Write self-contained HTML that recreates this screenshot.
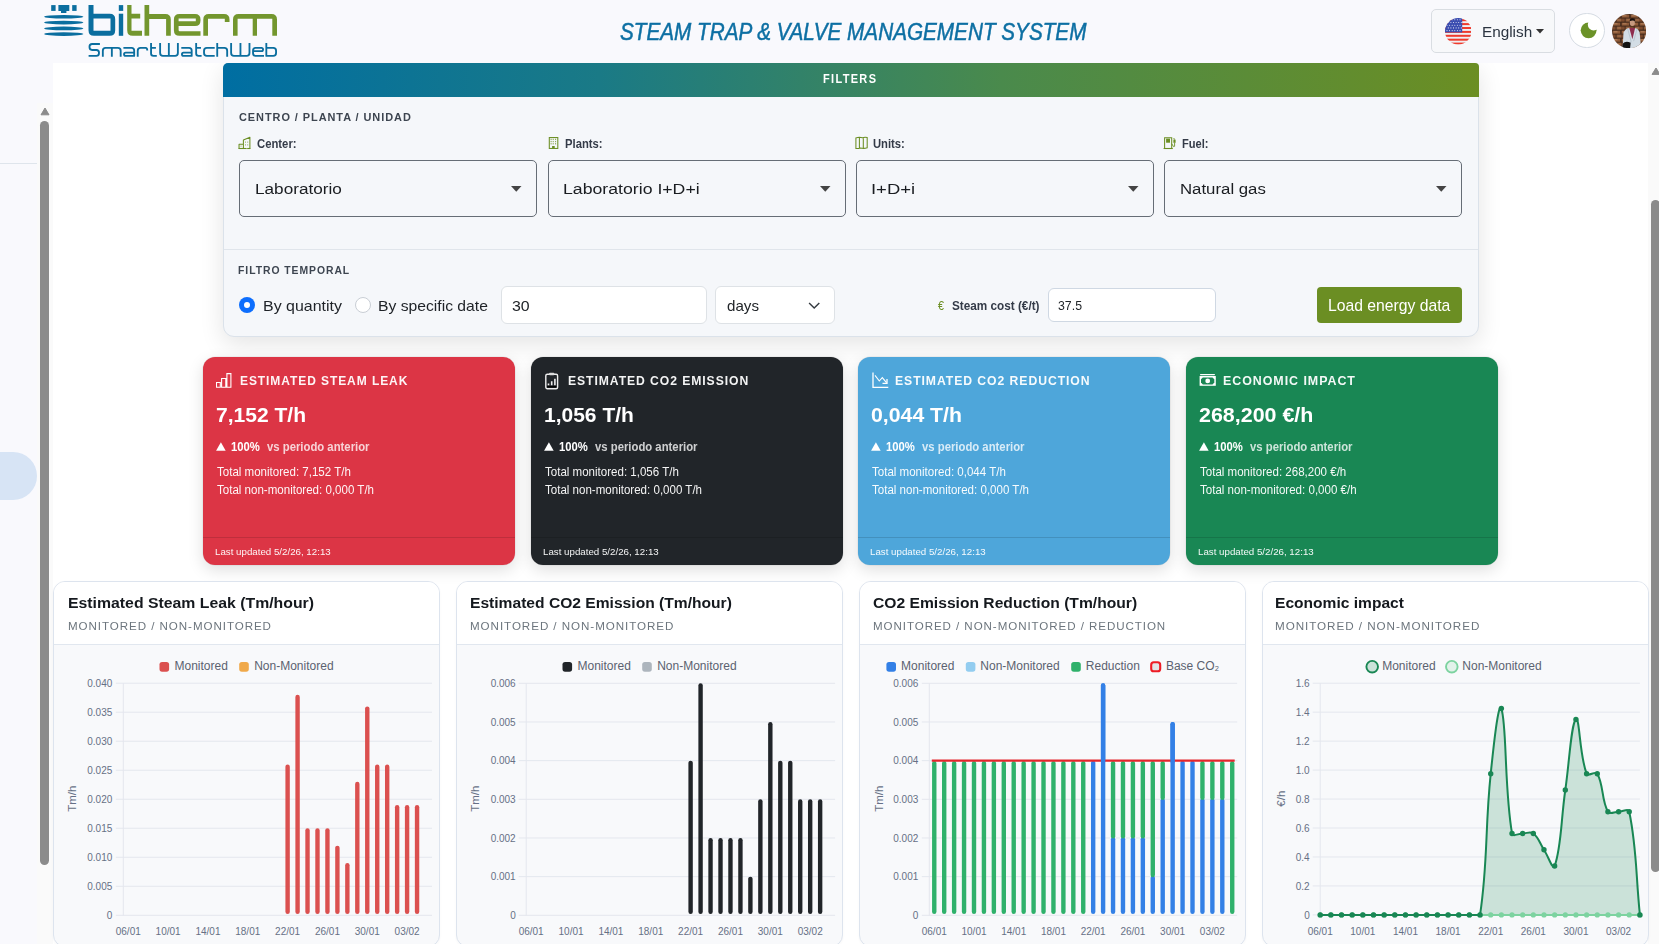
<!DOCTYPE html><html><head><meta charset="utf-8"><style>
*{box-sizing:border-box;margin:0;padding:0}
html,body{width:1659px;height:944px;overflow:hidden;background:#f9f9fd;font-family:"Liberation Sans",sans-serif;}
.a{position:absolute}
.t{position:absolute;white-space:nowrap;line-height:1}
</style></head><body><div class="a" style="left:0;top:163px;width:37px;height:1px;background:#dfe5ec"></div>
<div class="a" style="left:-30px;top:452px;width:67px;height:48px;border-radius:24px;background:#d7e4f5"></div>
<div class="a" style="left:37px;top:103px;width:15.5px;height:841px;background:#fafafa"></div>
<svg class="a" style="left:39.5px;top:107px" width="10" height="9"><path d="M5 1L9 7.8H1Z" fill="#8b8b8b" stroke="#8b8b8b" stroke-width="1" stroke-linejoin="round"/></svg>
<div class="a" style="left:40px;top:120.7px;width:9px;height:744.3px;border-radius:4.5px;background:#8b8b8b"></div>
<div class="a" style="left:52.5px;top:63px;width:1595.5px;height:881px;background:#fff"></div>
<div class="a" style="left:1648px;top:63px;width:11px;height:881px;background:#fafafa"></div>
<svg class="a" style="left:1650.5px;top:66px" width="10" height="9"><path d="M5 2L9 8.4H1Z" fill="#8b8b8b" stroke="#8b8b8b" stroke-width="1" stroke-linejoin="round"/></svg>
<div class="a" style="left:1651px;top:200px;width:9px;height:672px;border-radius:4.5px;background:#8b8b8b"></div>
<div class="a" style="left:223px;top:63px;width:1255.5px;height:274px;border:1px solid #dbe2ea;border-radius:5px 4px 11px 11px;background:#f5f7fa;box-shadow:0 7px 24px rgba(0,0,0,0.11)"></div>
<div class="a" style="left:223px;top:63px;width:1255.5px;height:34px;border-radius:5px 4px 0 0;background:linear-gradient(90deg,#006ea2 0%,#1a7a86 30%,#4a8a4c 62%,#6b8e23 100%)"></div>
<div class="a" style="left:224px;top:249px;width:1253.5px;height:1px;background:#e0e5eb"></div>
<div class="t" style="left:823.27px;top:72.00px;font-size:13.188px;font-weight:bold;font-style:normal;letter-spacing:1.600px;color:#fff;transform:scaleX(0.8339);transform-origin:0 0;">FILTERS</div>
<div class="t" style="left:239.10px;top:112.00px;font-size:11.594px;font-weight:bold;font-style:normal;letter-spacing:1.000px;color:#3d4550;transform:scaleX(0.9445);transform-origin:0 0;">CENTRO / PLANTA / UNIDAD</div>
<svg class="a" style="left:236px;top:134px" width="18" height="18" viewBox="0 0 18 18"><path d="M3.05 14.4V10.3H7.4V6.1L13.9 3.25V14.4Z M7.4 14.4V10.3" stroke="#6b8e23" stroke-width="1.05" fill="none" stroke-linejoin="round"/><path d="M2.6 14.5H14.3" stroke="#6b8e23" stroke-width="1.1"/><g fill="#6b8e23" opacity="0.75"><rect x="9" y="7.6" width="1" height="1"/><rect x="11.2" y="7.6" width="1" height="1"/><rect x="9" y="10.4" width="1" height="1"/><rect x="11.2" y="10.4" width="1" height="1"/><rect x="4.5" y="11.6" width="1" height="1"/></g><rect x="10.2" y="12.6" width="1.2" height="1.8" fill="#f5f7fa"/></svg>
<svg class="a" style="left:545px;top:134px" width="18" height="18" viewBox="0 0 18 18"><rect x="4.3" y="3.55" width="8.5" height="10.9" stroke="#6b8e23" stroke-width="1.05" fill="none"/><g fill="#6b8e23" opacity="0.8"><rect x="5.6" y="4.7" width="1" height="1.3"/><rect x="7.7" y="4.7" width="1" height="1.3"/><rect x="10.1" y="4.7" width="1" height="1.3"/><rect x="5.6" y="6.9" width="1" height="1.3"/><rect x="7.7" y="6.9" width="1" height="1.3"/><rect x="10.1" y="6.9" width="1" height="1.3"/><rect x="5.6" y="9.1" width="1" height="1.3"/><rect x="7.7" y="9.1" width="1" height="1.3"/><rect x="10.1" y="9.1" width="1" height="1.3"/></g><rect x="7.1" y="12" width="2.6" height="2.4" fill="#6b8e23"/></svg>
<svg class="a" style="left:852px;top:134px" width="18" height="18" viewBox="0 0 18 18"><path d="M3.9 14.5V3.9Q7 2.8 10.5 3.7Q13 2.9 15.2 3.6V13.8Q12 14.8 8.5 14Q6 14.8 3.9 14.5Z M7.4 3.5V14 M11.3 3.6V14.3" stroke="#6b8e23" stroke-width="1.05" fill="none"/></svg>
<svg class="a" style="left:1161px;top:134px" width="18" height="18" viewBox="0 0 18 18"><path d="M3.6 14.5V3.7H10.7V14.5" stroke="#6b8e23" stroke-width="1.05" fill="none"/><path d="M2.6 14.5H11.8" stroke="#6b8e23" stroke-width="1.1"/><rect x="5.1" y="4.6" width="3.9" height="4.1" fill="#6b8e23"/><rect x="12.4" y="5.6" width="2.2" height="3.2" fill="#6b8e23"/><path d="M10.7 9.8L12.6 12.6L13.6 12.3V8.8M13.4 5.6L12.8 4" stroke="#6b8e23" stroke-width="0.9" fill="none"/></svg>
<div class="t" style="left:257.20px;top:137.00px;font-size:13.043px;font-weight:bold;font-style:normal;letter-spacing:0.000px;color:#343b48;transform:scaleX(0.8667);transform-origin:0 0;">Center:</div>
<div class="t" style="left:564.94px;top:137.00px;font-size:13.043px;font-weight:bold;font-style:normal;letter-spacing:0.000px;color:#343b48;transform:scaleX(0.8634);transform-origin:0 0;">Plants:</div>
<div class="t" style="left:873.14px;top:137.00px;font-size:13.043px;font-weight:bold;font-style:normal;letter-spacing:0.000px;color:#343b48;transform:scaleX(0.8629);transform-origin:0 0;">Units:</div>
<div class="t" style="left:1181.65px;top:137.00px;font-size:13.043px;font-weight:bold;font-style:normal;letter-spacing:0.000px;color:#343b48;transform:scaleX(0.8517);transform-origin:0 0;">Fuel:</div>
<div class="a" style="left:239.0px;top:160.3px;width:298px;height:56.3px;border:1.3px solid #666d76;border-radius:5px;background:#f5f7fa"></div>
<div class="t" style="left:254.52px;top:182.00px;font-size:14.493px;font-weight:normal;font-style:normal;letter-spacing:0.000px;color:#1a1d21;transform:scaleX(1.1847);transform-origin:0 0;">Laboratorio</div>
<svg class="a" style="left:511.0px;top:186px" width="11" height="6"><path d="M0 0H10.5L5.25 5.8Z" fill="#444"/></svg>
<div class="a" style="left:547.6px;top:160.3px;width:298px;height:56.3px;border:1.3px solid #666d76;border-radius:5px;background:#f5f7fa"></div>
<div class="t" style="left:562.78px;top:182.00px;font-size:14.493px;font-weight:normal;font-style:normal;letter-spacing:0.000px;color:#1a1d21;transform:scaleX(1.2209);transform-origin:0 0;">Laboratorio I+D+i</div>
<svg class="a" style="left:819.6px;top:186px" width="11" height="6"><path d="M0 0H10.5L5.25 5.8Z" fill="#444"/></svg>
<div class="a" style="left:856.2px;top:160.3px;width:298px;height:56.3px;border:1.3px solid #666d76;border-radius:5px;background:#f5f7fa"></div>
<div class="t" style="left:870.93px;top:182.00px;font-size:14.493px;font-weight:normal;font-style:normal;letter-spacing:0.000px;color:#1a1d21;transform:scaleX(1.2727);transform-origin:0 0;">I+D+i</div>
<svg class="a" style="left:1128.2px;top:186px" width="11" height="6"><path d="M0 0H10.5L5.25 5.8Z" fill="#444"/></svg>
<div class="a" style="left:1164.0px;top:160.3px;width:298px;height:56.3px;border:1.3px solid #666d76;border-radius:5px;background:#f5f7fa"></div>
<div class="t" style="left:1179.64px;top:182.00px;font-size:14.493px;font-weight:normal;font-style:normal;letter-spacing:0.000px;color:#1a1d21;transform:scaleX(1.1589);transform-origin:0 0;">Natural gas</div>
<svg class="a" style="left:1436.0px;top:186px" width="11" height="6"><path d="M0 0H10.5L5.25 5.8Z" fill="#444"/></svg>
<div class="t" style="left:238.34px;top:265.00px;font-size:10.870px;font-weight:bold;font-style:normal;letter-spacing:1.000px;color:#3d4550;transform:scaleX(0.9557);transform-origin:0 0;">FILTRO TEMPORAL</div>
<div class="a" style="left:238.5px;top:296.6px;width:16.6px;height:16.6px;border-radius:50%;background:#0d6efd"></div>
<div class="a" style="left:243.6px;top:301.7px;width:6.4px;height:6.4px;border-radius:50%;background:#fff"></div>
<div class="t" style="left:262.72px;top:299.00px;font-size:14.710px;font-weight:normal;font-style:normal;letter-spacing:0.000px;color:#1e2227;transform:scaleX(1.0847);transform-origin:0 0;">By quantity</div>
<div class="a" style="left:355px;top:296.6px;width:16.4px;height:16.4px;border-radius:50%;border:1px solid #c9ced5;background:#fff"></div>
<div class="t" style="left:378.43px;top:299.00px;font-size:14.710px;font-weight:normal;font-style:normal;letter-spacing:0.000px;color:#1e2227;transform:scaleX(1.0673);transform-origin:0 0;">By specific date</div>
<div class="a" style="left:500.5px;top:286.3px;width:206px;height:37.3px;border:1px solid #dee2e6;border-radius:6px;background:#fff"></div>
<div class="t" style="left:512.42px;top:299.00px;font-size:14.710px;font-weight:normal;font-style:normal;letter-spacing:0.000px;color:#212529;transform:scaleX(1.0800);transform-origin:0 0;">30</div>
<div class="a" style="left:715.4px;top:286.3px;width:119.2px;height:37.3px;border:1px solid #dee2e6;border-radius:6px;background:#fff"></div>
<div class="t" style="left:727.27px;top:299.00px;font-size:14.710px;font-weight:normal;font-style:normal;letter-spacing:0.000px;color:#212529;transform:scaleX(1.0300);transform-origin:0 0;">days</div>
<svg class="a" style="left:808px;top:301.5px" width="13" height="8"><path d="M1.1 1.1L6.2 6.1L11.3 1.1" stroke="#343a40" stroke-width="1.45" fill="none"/></svg>
<div class="t" style="left:938.00px;top:300.00px;font-size:12.319px;font-weight:normal;font-style:normal;letter-spacing:0.000px;color:#6b8e23;transform:scaleX(0.8714);transform-origin:0 0;">&#8364;</div>
<div class="t" style="left:952.44px;top:300.00px;font-size:12.319px;font-weight:bold;font-style:normal;letter-spacing:0.000px;color:#343b48;transform:scaleX(0.9556);transform-origin:0 0;">Steam cost (&#8364;/t)</div>
<div class="a" style="left:1048.3px;top:288.2px;width:168px;height:33.6px;border:1px solid #cfd8e3;border-radius:6px;background:#fff"></div>
<div class="t" style="left:1058.32px;top:300.00px;font-size:12.609px;font-weight:normal;font-style:normal;letter-spacing:0.000px;color:#212529;transform:scaleX(0.9783);transform-origin:0 0;">37.5</div>
<div class="a" style="left:1317.2px;top:287px;width:144.7px;height:36px;border-radius:4px;background:#6b8e23"></div>
<div class="t" style="left:1327.90px;top:298.00px;font-size:15.797px;font-weight:normal;font-style:normal;letter-spacing:0.000px;color:#fff;transform:scaleX(0.9959);transform-origin:0 0;">Load energy data</div>
<div class="a" style="left:203.2px;top:357px;width:311.7px;height:208px;border-radius:12px;background:#dc3545;box-shadow:0 5px 16px rgba(0,0,0,0.13),0 0 0 0.5px rgba(0,0,0,0.08);overflow:hidden"><div class="a" style="left:0;right:0;top:180px;height:1px;background:rgba(0,0,0,0.13)"></div></div>
<svg class="a" style="left:216.4px;top:372.5px" width="16" height="15"><path d="M0.5 9.5H4.3V14.3H0.5Z M5.6 5.5H9.8V14.3H5.6Z M10.9 0.6H14.9V14.3H10.9Z" stroke="#fff" stroke-width="1.1" fill="none"/></svg>
<svg class="a" style="left:216.1px;top:442px" width="10" height="9"><path d="M4.9 0.2L9.7 8.8H0.1Z" fill="#fff"/></svg>
<div class="t" style="left:240.08px;top:374.00px;font-size:13.043px;font-weight:bold;font-style:normal;letter-spacing:1.000px;color:rgba(255,255,255,0.95);transform:scaleX(0.9211);transform-origin:0 0;">ESTIMATED STEAM LEAK</div>
<div class="t" style="left:215.56px;top:405.00px;font-size:20.290px;font-weight:bold;font-style:normal;letter-spacing:0.000px;color:#fff;transform:scaleX(1.0376);transform-origin:0 0;">7,152 T/h</div>
<div class="t" style="left:230.82px;top:441.00px;font-size:12.899px;font-weight:bold;font-style:normal;letter-spacing:0.000px;color:#fff;transform:scaleX(0.8781);transform-origin:0 0;">100%</div>
<div class="t" style="left:266.70px;top:441.00px;font-size:12.464px;font-weight:bold;font-style:normal;letter-spacing:0.000px;color:rgba(255,255,255,0.78);transform:scaleX(0.9088);transform-origin:0 0;">vs periodo anterior</div>
<div class="t" style="left:216.90px;top:466.00px;font-size:12.174px;font-weight:normal;font-style:normal;letter-spacing:0.000px;color:rgba(255,255,255,0.95);transform:scaleX(0.9493);transform-origin:0 0;">Total monitored: 7,152 T/h</div>
<div class="t" style="left:216.90px;top:484.00px;font-size:12.319px;font-weight:normal;font-style:normal;letter-spacing:0.000px;color:rgba(255,255,255,0.95);transform:scaleX(0.9389);transform-origin:0 0;">Total non-monitored: 0,000 T/h</div>
<div class="t" style="left:215.25px;top:548.00px;font-size:9.275px;font-weight:normal;font-style:normal;letter-spacing:0.000px;color:rgba(255,255,255,0.95);transform:scaleX(1.0495);transform-origin:0 0;">Last updated 5/2/26, 12:13</div>
<div class="a" style="left:531.3px;top:357px;width:311.7px;height:208px;border-radius:12px;background:#212529;box-shadow:0 5px 16px rgba(0,0,0,0.13),0 0 0 0.5px rgba(0,0,0,0.08);overflow:hidden"><div class="a" style="left:0;right:0;top:180px;height:1px;background:rgba(0,0,0,0.13)"></div></div>
<svg class="a" style="left:545.1px;top:371.5px" width="14" height="18"><rect x="0.8" y="2.2" width="11.8" height="14.5" rx="1.5" stroke="#eee" stroke-width="1.4" fill="none"/><rect x="4" y="0.7" width="5.4" height="2.6" rx="1" fill="#ddd"/><path d="M3.5 13.2V11.5M6.7 13.2V9.2M9.9 13.2V6.8" stroke="#eee" stroke-width="1.6"/><rect x="2.2" y="14" width="9" height="1.4" fill="#000"/></svg>
<svg class="a" style="left:544.2px;top:442px" width="10" height="9"><path d="M4.9 0.2L9.7 8.8H0.1Z" fill="#fff"/></svg>
<div class="t" style="left:568.17px;top:374.00px;font-size:13.043px;font-weight:bold;font-style:normal;letter-spacing:1.000px;color:rgba(255,255,255,0.95);transform:scaleX(0.9333);transform-origin:0 0;">ESTIMATED CO2 EMISSION</div>
<div class="t" style="left:543.66px;top:405.00px;font-size:20.290px;font-weight:bold;font-style:normal;letter-spacing:0.000px;color:#fff;transform:scaleX(1.0353);transform-origin:0 0;">1,056 T/h</div>
<div class="t" style="left:558.92px;top:441.00px;font-size:12.899px;font-weight:bold;font-style:normal;letter-spacing:0.000px;color:#fff;transform:scaleX(0.8781);transform-origin:0 0;">100%</div>
<div class="t" style="left:594.80px;top:441.00px;font-size:12.464px;font-weight:bold;font-style:normal;letter-spacing:0.000px;color:rgba(255,255,255,0.78);transform:scaleX(0.9088);transform-origin:0 0;">vs periodo anterior</div>
<div class="t" style="left:545.00px;top:466.00px;font-size:12.174px;font-weight:normal;font-style:normal;letter-spacing:0.000px;color:rgba(255,255,255,0.95);transform:scaleX(0.9493);transform-origin:0 0;">Total monitored: 1,056 T/h</div>
<div class="t" style="left:545.00px;top:484.00px;font-size:12.319px;font-weight:normal;font-style:normal;letter-spacing:0.000px;color:rgba(255,255,255,0.95);transform:scaleX(0.9389);transform-origin:0 0;">Total non-monitored: 0,000 T/h</div>
<div class="t" style="left:543.35px;top:548.00px;font-size:9.275px;font-weight:normal;font-style:normal;letter-spacing:0.000px;color:rgba(255,255,255,0.95);transform:scaleX(1.0495);transform-origin:0 0;">Last updated 5/2/26, 12:13</div>
<div class="a" style="left:858.2px;top:357px;width:311.7px;height:208px;border-radius:12px;background:#4ea6da;box-shadow:0 5px 16px rgba(0,0,0,0.13),0 0 0 0.5px rgba(0,0,0,0.08);overflow:hidden"><div class="a" style="left:0;right:0;top:180px;height:1px;background:rgba(0,0,0,0.13)"></div></div>
<svg class="a" style="left:872.0px;top:372px" width="17" height="16"><path d="M1 0.5V15.3H16.3" stroke="#fff" stroke-width="1.3" fill="none"/><path d="M3 3.3L7.3 9L10.3 5.6L14.5 10.6" stroke="#fff" stroke-width="1.1" fill="none"/><path d="M10.5 11.3H15V7" stroke="#fff" stroke-width="1.3" fill="none"/></svg>
<svg class="a" style="left:871.1px;top:442px" width="10" height="9"><path d="M4.9 0.2L9.7 8.8H0.1Z" fill="#fff"/></svg>
<div class="t" style="left:895.06px;top:374.00px;font-size:13.043px;font-weight:bold;font-style:normal;letter-spacing:1.000px;color:rgba(255,255,255,0.95);transform:scaleX(0.9364);transform-origin:0 0;">ESTIMATED CO2 REDUCTION</div>
<div class="t" style="left:870.55px;top:405.00px;font-size:20.290px;font-weight:bold;font-style:normal;letter-spacing:0.000px;color:#fff;transform:scaleX(1.0482);transform-origin:0 0;">0,044 T/h</div>
<div class="t" style="left:885.82px;top:441.00px;font-size:12.899px;font-weight:bold;font-style:normal;letter-spacing:0.000px;color:#fff;transform:scaleX(0.8781);transform-origin:0 0;">100%</div>
<div class="t" style="left:921.70px;top:441.00px;font-size:12.464px;font-weight:bold;font-style:normal;letter-spacing:0.000px;color:rgba(255,255,255,0.78);transform:scaleX(0.9088);transform-origin:0 0;">vs periodo anterior</div>
<div class="t" style="left:871.90px;top:466.00px;font-size:12.174px;font-weight:normal;font-style:normal;letter-spacing:0.000px;color:rgba(255,255,255,0.95);transform:scaleX(0.9493);transform-origin:0 0;">Total monitored: 0,044 T/h</div>
<div class="t" style="left:871.90px;top:484.00px;font-size:12.319px;font-weight:normal;font-style:normal;letter-spacing:0.000px;color:rgba(255,255,255,0.95);transform:scaleX(0.9389);transform-origin:0 0;">Total non-monitored: 0,000 T/h</div>
<div class="t" style="left:870.25px;top:548.00px;font-size:9.275px;font-weight:normal;font-style:normal;letter-spacing:0.000px;color:rgba(255,255,255,0.95);transform:scaleX(1.0495);transform-origin:0 0;">Last updated 5/2/26, 12:13</div>
<div class="a" style="left:1186.3px;top:357px;width:311.7px;height:208px;border-radius:12px;background:#198754;box-shadow:0 5px 16px rgba(0,0,0,0.13),0 0 0 0.5px rgba(0,0,0,0.08);overflow:hidden"><div class="a" style="left:0;right:0;top:180px;height:1px;background:rgba(0,0,0,0.13)"></div></div>
<svg class="a" style="left:1199.1px;top:374px" width="17" height="12"><rect x="1" y="0" width="15" height="1.2" rx="0.6" fill="#fff"/><rect x="0.6" y="2" width="16.2" height="9.8" fill="#fff"/><path d="M3.8 3.4H13.5L15.3 5.3V8.5L13.5 10.4H3.8L2 8.5V5.3Z" fill="#198754"/><circle cx="8.7" cy="6.9" r="2.4" fill="#fff"/></svg>
<svg class="a" style="left:1199.2px;top:442px" width="10" height="9"><path d="M4.9 0.2L9.7 8.8H0.1Z" fill="#fff"/></svg>
<div class="t" style="left:1223.15px;top:374.00px;font-size:13.043px;font-weight:bold;font-style:normal;letter-spacing:1.000px;color:rgba(255,255,255,0.95);transform:scaleX(0.9540);transform-origin:0 0;">ECONOMIC IMPACT</div>
<div class="t" style="left:1198.64px;top:405.00px;font-size:20.290px;font-weight:bold;font-style:normal;letter-spacing:0.000px;color:#fff;transform:scaleX(1.0566);transform-origin:0 0;">268,200 &#8364;/h</div>
<div class="t" style="left:1213.92px;top:441.00px;font-size:12.899px;font-weight:bold;font-style:normal;letter-spacing:0.000px;color:#fff;transform:scaleX(0.8781);transform-origin:0 0;">100%</div>
<div class="t" style="left:1249.80px;top:441.00px;font-size:12.464px;font-weight:bold;font-style:normal;letter-spacing:0.000px;color:rgba(255,255,255,0.78);transform:scaleX(0.9088);transform-origin:0 0;">vs periodo anterior</div>
<div class="t" style="left:1200.00px;top:466.00px;font-size:12.174px;font-weight:normal;font-style:normal;letter-spacing:0.000px;color:rgba(255,255,255,0.95);transform:scaleX(0.9493);transform-origin:0 0;">Total monitored: 268,200 &#8364;/h</div>
<div class="t" style="left:1200.00px;top:484.00px;font-size:12.319px;font-weight:normal;font-style:normal;letter-spacing:0.000px;color:rgba(255,255,255,0.95);transform:scaleX(0.9389);transform-origin:0 0;">Total non-monitored: 0,000 &#8364;/h</div>
<div class="t" style="left:1198.35px;top:548.00px;font-size:9.275px;font-weight:normal;font-style:normal;letter-spacing:0.000px;color:rgba(255,255,255,0.95);transform:scaleX(1.0495);transform-origin:0 0;">Last updated 5/2/26, 12:13</div>
<div class="a" style="left:53.2px;top:581.2px;width:387px;height:366px;border:1px solid #dde4ee;border-radius:12px;background:#f8f9fb;overflow:hidden;box-shadow:0 1px 3px rgba(0,0,0,0.03)"><div class="a" style="left:0;right:0;top:0;height:63px;background:#fff;border-bottom:1px solid #e1e7ef"></div></div>
<div class="t" style="left:67.92px;top:596.00px;font-size:14.710px;font-weight:bold;font-style:normal;letter-spacing:0.000px;color:#15191e;transform:scaleX(1.0753);transform-origin:0 0;">Estimated Steam Leak (Tm/hour)</div>
<div class="t" style="left:67.95px;top:621.00px;font-size:11.087px;font-weight:normal;font-style:normal;letter-spacing:0.900px;color:#6c757d;transform:scaleX(1.0456);transform-origin:0 0;">MONITORED / NON-MONITORED</div>
<div class="a" style="left:456.2px;top:581.2px;width:387px;height:366px;border:1px solid #dde4ee;border-radius:12px;background:#f8f9fb;overflow:hidden;box-shadow:0 1px 3px rgba(0,0,0,0.03)"><div class="a" style="left:0;right:0;top:0;height:63px;background:#fff;border-bottom:1px solid #e1e7ef"></div></div>
<div class="t" style="left:470.44px;top:596.00px;font-size:14.710px;font-weight:bold;font-style:normal;letter-spacing:0.000px;color:#15191e;transform:scaleX(1.0612);transform-origin:0 0;">Estimated CO2 Emission (Tm/hour)</div>
<div class="t" style="left:470.45px;top:621.00px;font-size:11.087px;font-weight:normal;font-style:normal;letter-spacing:0.900px;color:#6c757d;transform:scaleX(1.0477);transform-origin:0 0;">MONITORED / NON-MONITORED</div>
<div class="a" style="left:859.2px;top:581.2px;width:387px;height:366px;border:1px solid #dde4ee;border-radius:12px;background:#f8f9fb;overflow:hidden;box-shadow:0 1px 3px rgba(0,0,0,0.03)"><div class="a" style="left:0;right:0;top:0;height:63px;background:#fff;border-bottom:1px solid #e1e7ef"></div></div>
<div class="t" style="left:872.74px;top:596.00px;font-size:14.710px;font-weight:bold;font-style:normal;letter-spacing:0.000px;color:#15191e;transform:scaleX(1.0636);transform-origin:0 0;">CO2 Emission Reduction (Tm/hour)</div>
<div class="t" style="left:872.76px;top:621.00px;font-size:11.087px;font-weight:normal;font-style:normal;letter-spacing:0.900px;color:#6c757d;transform:scaleX(1.0435);transform-origin:0 0;">MONITORED / NON-MONITORED / REDUCTION</div>
<div class="a" style="left:1261.5px;top:581.2px;width:387px;height:366px;border:1px solid #dde4ee;border-radius:12px;background:#f8f9fb;overflow:hidden;box-shadow:0 1px 3px rgba(0,0,0,0.03)"><div class="a" style="left:0;right:0;top:0;height:63px;background:#fff;border-bottom:1px solid #e1e7ef"></div></div>
<div class="t" style="left:1275.44px;top:596.00px;font-size:14.710px;font-weight:bold;font-style:normal;letter-spacing:0.000px;color:#15191e;transform:scaleX(1.0587);transform-origin:0 0;">Economic impact</div>
<div class="t" style="left:1275.45px;top:621.00px;font-size:11.087px;font-weight:normal;font-style:normal;letter-spacing:0.900px;color:#6c757d;transform:scaleX(1.0528);transform-origin:0 0;">MONITORED / NON-MONITORED</div>
<svg class="a" style="left:0;top:0" width="1659" height="944" viewBox="0 0 1659 944" font-family="Liberation Sans, sans-serif"><line x1="115.8" y1="915.30" x2="432.0" y2="915.30" stroke="#e4e7ee" stroke-width="1"/><text x="112.3" y="918.90" text-anchor="end" font-size="10" fill="#667085">0</text><line x1="115.8" y1="886.29" x2="432.0" y2="886.29" stroke="#e4e7ee" stroke-width="1"/><text x="112.3" y="889.89" text-anchor="end" font-size="10" fill="#667085">0.005</text><line x1="115.8" y1="857.27" x2="432.0" y2="857.27" stroke="#e4e7ee" stroke-width="1"/><text x="112.3" y="860.88" text-anchor="end" font-size="10" fill="#667085">0.010</text><line x1="115.8" y1="828.26" x2="432.0" y2="828.26" stroke="#e4e7ee" stroke-width="1"/><text x="112.3" y="831.86" text-anchor="end" font-size="10" fill="#667085">0.015</text><line x1="115.8" y1="799.25" x2="432.0" y2="799.25" stroke="#e4e7ee" stroke-width="1"/><text x="112.3" y="802.85" text-anchor="end" font-size="10" fill="#667085">0.020</text><line x1="115.8" y1="770.24" x2="432.0" y2="770.24" stroke="#e4e7ee" stroke-width="1"/><text x="112.3" y="773.84" text-anchor="end" font-size="10" fill="#667085">0.025</text><line x1="115.8" y1="741.23" x2="432.0" y2="741.23" stroke="#e4e7ee" stroke-width="1"/><text x="112.3" y="744.83" text-anchor="end" font-size="10" fill="#667085">0.030</text><line x1="115.8" y1="712.21" x2="432.0" y2="712.21" stroke="#e4e7ee" stroke-width="1"/><text x="112.3" y="715.81" text-anchor="end" font-size="10" fill="#667085">0.035</text><line x1="115.8" y1="683.20" x2="432.0" y2="683.20" stroke="#e4e7ee" stroke-width="1"/><text x="112.3" y="686.80" text-anchor="end" font-size="10" fill="#667085">0.040</text><line x1="123.30" y1="683.2" x2="123.30" y2="915.8" stroke="#e4e7ee" stroke-width="1"/><text x="128.28" y="935.3" text-anchor="middle" font-size="10" fill="#667085">06/01</text><text x="168.11" y="935.3" text-anchor="middle" font-size="10" fill="#667085">10/01</text><text x="207.94" y="935.3" text-anchor="middle" font-size="10" fill="#667085">14/01</text><text x="247.78" y="935.3" text-anchor="middle" font-size="10" fill="#667085">18/01</text><text x="287.61" y="935.3" text-anchor="middle" font-size="10" fill="#667085">22/01</text><text x="327.44" y="935.3" text-anchor="middle" font-size="10" fill="#667085">26/01</text><text x="367.27" y="935.3" text-anchor="middle" font-size="10" fill="#667085">30/01</text><text x="407.10" y="935.3" text-anchor="middle" font-size="10" fill="#667085">03/02</text><text transform="translate(76.4 798.7) rotate(-90)" text-anchor="middle" font-size="11.5" fill="#667085">Tm/h</text><rect x="285.41" y="764.44" width="4.40" height="149.56" rx="2.20" fill="#db504f"/><rect x="295.37" y="694.81" width="4.40" height="219.19" rx="2.20" fill="#db504f"/><rect x="305.32" y="828.26" width="4.40" height="85.74" rx="2.20" fill="#db504f"/><rect x="315.28" y="828.26" width="4.40" height="85.74" rx="2.20" fill="#db504f"/><rect x="325.24" y="828.26" width="4.40" height="85.74" rx="2.20" fill="#db504f"/><rect x="335.20" y="845.67" width="4.40" height="68.33" rx="2.20" fill="#db504f"/><rect x="345.16" y="863.08" width="4.40" height="50.92" rx="2.20" fill="#db504f"/><rect x="355.11" y="781.84" width="4.40" height="132.16" rx="2.20" fill="#db504f"/><rect x="365.07" y="706.41" width="4.40" height="207.59" rx="2.20" fill="#db504f"/><rect x="375.03" y="764.44" width="4.40" height="149.56" rx="2.20" fill="#db504f"/><rect x="384.99" y="764.44" width="4.40" height="149.56" rx="2.20" fill="#db504f"/><rect x="394.95" y="805.05" width="4.40" height="108.95" rx="2.20" fill="#db504f"/><rect x="404.90" y="805.05" width="4.40" height="108.95" rx="2.20" fill="#db504f"/><rect x="414.86" y="805.05" width="4.40" height="108.95" rx="2.20" fill="#db504f"/><rect x="159.5" y="661.9" width="9.6" height="9.8" rx="2.6" fill="#db504f"/><text x="174.5" y="670.2" font-size="12" fill="#5b6270">Monitored</text><rect x="239.2" y="661.9" width="9.6" height="9.8" rx="2.6" fill="#f0a94a"/><text x="254.2" y="670.2" font-size="12" fill="#5b6270">Non-Monitored</text><line x1="518.7" y1="915.30" x2="835.1" y2="915.30" stroke="#e4e7ee" stroke-width="1"/><text x="515.7" y="918.90" text-anchor="end" font-size="10" fill="#667085">0</text><line x1="518.7" y1="876.63" x2="835.1" y2="876.63" stroke="#e4e7ee" stroke-width="1"/><text x="515.7" y="880.23" text-anchor="end" font-size="10" fill="#667085">0.001</text><line x1="518.7" y1="837.97" x2="835.1" y2="837.97" stroke="#e4e7ee" stroke-width="1"/><text x="515.7" y="841.57" text-anchor="end" font-size="10" fill="#667085">0.002</text><line x1="518.7" y1="799.30" x2="835.1" y2="799.30" stroke="#e4e7ee" stroke-width="1"/><text x="515.7" y="802.90" text-anchor="end" font-size="10" fill="#667085">0.003</text><line x1="518.7" y1="760.63" x2="835.1" y2="760.63" stroke="#e4e7ee" stroke-width="1"/><text x="515.7" y="764.23" text-anchor="end" font-size="10" fill="#667085">0.004</text><line x1="518.7" y1="721.97" x2="835.1" y2="721.97" stroke="#e4e7ee" stroke-width="1"/><text x="515.7" y="725.57" text-anchor="end" font-size="10" fill="#667085">0.005</text><line x1="518.7" y1="683.30" x2="835.1" y2="683.30" stroke="#e4e7ee" stroke-width="1"/><text x="515.7" y="686.90" text-anchor="end" font-size="10" fill="#667085">0.006</text><line x1="526.20" y1="683.3" x2="526.20" y2="915.8" stroke="#e4e7ee" stroke-width="1"/><text x="531.18" y="935.3" text-anchor="middle" font-size="10" fill="#667085">06/01</text><text x="571.04" y="935.3" text-anchor="middle" font-size="10" fill="#667085">10/01</text><text x="610.90" y="935.3" text-anchor="middle" font-size="10" fill="#667085">14/01</text><text x="650.76" y="935.3" text-anchor="middle" font-size="10" fill="#667085">18/01</text><text x="690.61" y="935.3" text-anchor="middle" font-size="10" fill="#667085">22/01</text><text x="730.47" y="935.3" text-anchor="middle" font-size="10" fill="#667085">26/01</text><text x="770.33" y="935.3" text-anchor="middle" font-size="10" fill="#667085">30/01</text><text x="810.19" y="935.3" text-anchor="middle" font-size="10" fill="#667085">03/02</text><text transform="translate(479.4 798.7) rotate(-90)" text-anchor="middle" font-size="11.5" fill="#667085">Tm/h</text><rect x="688.41" y="760.63" width="4.40" height="153.37" rx="2.20" fill="#212529"/><rect x="698.38" y="683.30" width="4.40" height="230.70" rx="2.20" fill="#212529"/><rect x="708.34" y="837.97" width="4.40" height="76.03" rx="2.20" fill="#212529"/><rect x="718.31" y="837.97" width="4.40" height="76.03" rx="2.20" fill="#212529"/><rect x="728.27" y="837.97" width="4.40" height="76.03" rx="2.20" fill="#212529"/><rect x="738.24" y="837.97" width="4.40" height="76.03" rx="2.20" fill="#212529"/><rect x="748.20" y="876.63" width="4.40" height="37.37" rx="2.20" fill="#212529"/><rect x="758.17" y="799.30" width="4.40" height="114.70" rx="2.20" fill="#212529"/><rect x="768.13" y="721.97" width="4.40" height="192.03" rx="2.20" fill="#212529"/><rect x="778.10" y="760.63" width="4.40" height="153.37" rx="2.20" fill="#212529"/><rect x="788.06" y="760.63" width="4.40" height="153.37" rx="2.20" fill="#212529"/><rect x="798.02" y="799.30" width="4.40" height="114.70" rx="2.20" fill="#212529"/><rect x="807.99" y="799.30" width="4.40" height="114.70" rx="2.20" fill="#212529"/><rect x="817.95" y="799.30" width="4.40" height="114.70" rx="2.20" fill="#212529"/><rect x="562.5" y="661.9" width="9.6" height="9.8" rx="2.6" fill="#212529"/><text x="577.5" y="670.2" font-size="12" fill="#5b6270">Monitored</text><rect x="642.2" y="661.9" width="9.6" height="9.8" rx="2.6" fill="#adb5bd"/><text x="657.2" y="670.2" font-size="12" fill="#5b6270">Non-Monitored</text><line x1="921.8" y1="915.30" x2="1237.2" y2="915.30" stroke="#e4e7ee" stroke-width="1"/><text x="918.3" y="918.90" text-anchor="end" font-size="10" fill="#667085">0</text><line x1="921.8" y1="876.63" x2="1237.2" y2="876.63" stroke="#e4e7ee" stroke-width="1"/><text x="918.3" y="880.23" text-anchor="end" font-size="10" fill="#667085">0.001</text><line x1="921.8" y1="837.97" x2="1237.2" y2="837.97" stroke="#e4e7ee" stroke-width="1"/><text x="918.3" y="841.57" text-anchor="end" font-size="10" fill="#667085">0.002</text><line x1="921.8" y1="799.30" x2="1237.2" y2="799.30" stroke="#e4e7ee" stroke-width="1"/><text x="918.3" y="802.90" text-anchor="end" font-size="10" fill="#667085">0.003</text><line x1="921.8" y1="760.63" x2="1237.2" y2="760.63" stroke="#e4e7ee" stroke-width="1"/><text x="918.3" y="764.23" text-anchor="end" font-size="10" fill="#667085">0.004</text><line x1="921.8" y1="721.97" x2="1237.2" y2="721.97" stroke="#e4e7ee" stroke-width="1"/><text x="918.3" y="725.57" text-anchor="end" font-size="10" fill="#667085">0.005</text><line x1="921.8" y1="683.30" x2="1237.2" y2="683.30" stroke="#e4e7ee" stroke-width="1"/><text x="918.3" y="686.90" text-anchor="end" font-size="10" fill="#667085">0.006</text><line x1="929.30" y1="683.3" x2="929.30" y2="915.8" stroke="#e4e7ee" stroke-width="1"/><text x="934.27" y="935.3" text-anchor="middle" font-size="10" fill="#667085">06/01</text><text x="974.00" y="935.3" text-anchor="middle" font-size="10" fill="#667085">10/01</text><text x="1013.72" y="935.3" text-anchor="middle" font-size="10" fill="#667085">14/01</text><text x="1053.45" y="935.3" text-anchor="middle" font-size="10" fill="#667085">18/01</text><text x="1093.18" y="935.3" text-anchor="middle" font-size="10" fill="#667085">22/01</text><text x="1132.91" y="935.3" text-anchor="middle" font-size="10" fill="#667085">26/01</text><text x="1172.64" y="935.3" text-anchor="middle" font-size="10" fill="#667085">30/01</text><text x="1212.37" y="935.3" text-anchor="middle" font-size="10" fill="#667085">03/02</text><text transform="translate(882.5 798.7) rotate(-90)" text-anchor="middle" font-size="11.5" fill="#667085">Tm/h</text><rect x="932.07" y="760.93" width="4.40" height="153.07" rx="2.20" fill="#2fb16b"/><rect x="942.00" y="760.93" width="4.40" height="153.07" rx="2.20" fill="#2fb16b"/><rect x="951.93" y="760.93" width="4.40" height="153.07" rx="2.20" fill="#2fb16b"/><rect x="961.86" y="760.93" width="4.40" height="153.07" rx="2.20" fill="#2fb16b"/><rect x="971.80" y="760.93" width="4.40" height="153.07" rx="2.20" fill="#2fb16b"/><rect x="981.73" y="760.93" width="4.40" height="153.07" rx="2.20" fill="#2fb16b"/><rect x="991.66" y="760.93" width="4.40" height="153.07" rx="2.20" fill="#2fb16b"/><rect x="1001.59" y="760.93" width="4.40" height="153.07" rx="2.20" fill="#2fb16b"/><rect x="1011.52" y="760.93" width="4.40" height="153.07" rx="2.20" fill="#2fb16b"/><rect x="1021.46" y="760.93" width="4.40" height="153.07" rx="2.20" fill="#2fb16b"/><rect x="1031.39" y="760.93" width="4.40" height="153.07" rx="2.20" fill="#2fb16b"/><rect x="1041.32" y="760.93" width="4.40" height="153.07" rx="2.20" fill="#2fb16b"/><rect x="1051.25" y="760.93" width="4.40" height="153.07" rx="2.20" fill="#2fb16b"/><rect x="1061.19" y="760.93" width="4.40" height="153.07" rx="2.20" fill="#2fb16b"/><rect x="1071.12" y="760.93" width="4.40" height="153.07" rx="2.20" fill="#2fb16b"/><rect x="1081.05" y="760.93" width="4.40" height="153.07" rx="2.20" fill="#2fb16b"/><rect x="1090.98" y="760.63" width="4.40" height="153.37" rx="2.20" fill="#3380e6"/><rect x="1100.91" y="683.30" width="4.40" height="230.70" rx="2.20" fill="#3380e6"/><rect x="1110.85" y="836.97" width="4.40" height="77.03" rx="2.20" fill="#3380e6"/><rect x="1110.85" y="760.93" width="4.40" height="77.63" rx="2.20" fill="#2fb16b"/><rect x="1120.78" y="836.97" width="4.40" height="77.03" rx="2.20" fill="#3380e6"/><rect x="1120.78" y="760.93" width="4.40" height="77.63" rx="2.20" fill="#2fb16b"/><rect x="1130.71" y="836.97" width="4.40" height="77.03" rx="2.20" fill="#3380e6"/><rect x="1130.71" y="760.93" width="4.40" height="77.63" rx="2.20" fill="#2fb16b"/><rect x="1140.64" y="836.97" width="4.40" height="77.03" rx="2.20" fill="#3380e6"/><rect x="1140.64" y="760.93" width="4.40" height="77.63" rx="2.20" fill="#2fb16b"/><rect x="1150.58" y="875.63" width="4.40" height="38.37" rx="2.20" fill="#3380e6"/><rect x="1150.58" y="760.93" width="4.40" height="116.30" rx="2.20" fill="#2fb16b"/><rect x="1160.51" y="798.30" width="4.40" height="115.70" rx="2.20" fill="#3380e6"/><rect x="1160.51" y="760.93" width="4.40" height="38.97" rx="2.20" fill="#2fb16b"/><rect x="1170.44" y="721.97" width="4.40" height="192.03" rx="2.20" fill="#3380e6"/><rect x="1180.37" y="760.63" width="4.40" height="153.37" rx="2.20" fill="#3380e6"/><rect x="1190.30" y="760.63" width="4.40" height="153.37" rx="2.20" fill="#3380e6"/><rect x="1200.24" y="798.30" width="4.40" height="115.70" rx="2.20" fill="#3380e6"/><rect x="1200.24" y="760.93" width="4.40" height="38.97" rx="2.20" fill="#2fb16b"/><rect x="1210.17" y="798.30" width="4.40" height="115.70" rx="2.20" fill="#3380e6"/><rect x="1210.17" y="760.93" width="4.40" height="38.97" rx="2.20" fill="#2fb16b"/><rect x="1220.10" y="798.30" width="4.40" height="115.70" rx="2.20" fill="#3380e6"/><rect x="1220.10" y="760.93" width="4.40" height="38.97" rx="2.20" fill="#2fb16b"/><rect x="1230.03" y="760.93" width="4.40" height="153.07" rx="2.20" fill="#2fb16b"/><line x1="931.8" y1="760.63" x2="1234.7" y2="760.63" stroke="#e4262c" stroke-width="2.2"/><rect x="1100.91" y="683.30" width="4.40" height="80.33" rx="2.20" fill="#3380e6"/><rect x="1170.44" y="721.97" width="4.40" height="41.67" rx="2.20" fill="#3380e6"/><rect x="886.4" y="661.9" width="9.6" height="9.8" rx="2.6" fill="#3380e6"/><text x="901.1" y="670.2" font-size="12" fill="#5b6270">Monitored</text><rect x="965.8" y="661.9" width="9.6" height="9.8" rx="2.6" fill="#93cdf0"/><text x="980.3" y="670.2" font-size="12" fill="#5b6270">Non-Monitored</text><rect x="1071.2" y="661.9" width="9.6" height="9.8" rx="2.6" fill="#2fb16b"/><text x="1085.8" y="670.2" font-size="12" fill="#5b6270">Reduction</text><rect x="1151.2" y="662.3" width="9" height="9" rx="2.6" fill="#e3e4e6" stroke="#ee1c25" stroke-width="2.1"/><text x="1165.9" y="670.2" font-size="12" fill="#5b6270">Base CO&#8322;</text><line x1="1312.7" y1="914.90" x2="1639.9" y2="914.90" stroke="#e4e7ee" stroke-width="1"/><text x="1309.7" y="918.50" text-anchor="end" font-size="10" fill="#667085">0</text><line x1="1312.7" y1="885.94" x2="1639.9" y2="885.94" stroke="#e4e7ee" stroke-width="1"/><text x="1309.7" y="889.54" text-anchor="end" font-size="10" fill="#667085">0.2</text><line x1="1312.7" y1="856.98" x2="1639.9" y2="856.98" stroke="#e4e7ee" stroke-width="1"/><text x="1309.7" y="860.58" text-anchor="end" font-size="10" fill="#667085">0.4</text><line x1="1312.7" y1="828.01" x2="1639.9" y2="828.01" stroke="#e4e7ee" stroke-width="1"/><text x="1309.7" y="831.61" text-anchor="end" font-size="10" fill="#667085">0.6</text><line x1="1312.7" y1="799.05" x2="1639.9" y2="799.05" stroke="#e4e7ee" stroke-width="1"/><text x="1309.7" y="802.65" text-anchor="end" font-size="10" fill="#667085">0.8</text><line x1="1312.7" y1="770.09" x2="1639.9" y2="770.09" stroke="#e4e7ee" stroke-width="1"/><text x="1309.7" y="773.69" text-anchor="end" font-size="10" fill="#667085">1.0</text><line x1="1312.7" y1="741.12" x2="1639.9" y2="741.12" stroke="#e4e7ee" stroke-width="1"/><text x="1309.7" y="744.73" text-anchor="end" font-size="10" fill="#667085">1.2</text><line x1="1312.7" y1="712.16" x2="1639.9" y2="712.16" stroke="#e4e7ee" stroke-width="1"/><text x="1309.7" y="715.76" text-anchor="end" font-size="10" fill="#667085">1.4</text><line x1="1312.7" y1="683.20" x2="1639.9" y2="683.20" stroke="#e4e7ee" stroke-width="1"/><text x="1309.7" y="686.80" text-anchor="end" font-size="10" fill="#667085">1.6</text><line x1="1320.20" y1="683.2" x2="1320.20" y2="915.4" stroke="#e4e7ee" stroke-width="1"/><text x="1320.20" y="935.3" text-anchor="middle" font-size="10" fill="#667085">06/01</text><text x="1362.83" y="935.3" text-anchor="middle" font-size="10" fill="#667085">10/01</text><text x="1405.45" y="935.3" text-anchor="middle" font-size="10" fill="#667085">14/01</text><text x="1448.08" y="935.3" text-anchor="middle" font-size="10" fill="#667085">18/01</text><text x="1490.71" y="935.3" text-anchor="middle" font-size="10" fill="#667085">22/01</text><text x="1533.33" y="935.3" text-anchor="middle" font-size="10" fill="#667085">26/01</text><text x="1575.96" y="935.3" text-anchor="middle" font-size="10" fill="#667085">30/01</text><text x="1618.59" y="935.3" text-anchor="middle" font-size="10" fill="#667085">03/02</text><text transform="translate(1285.4 798.7) rotate(-90)" text-anchor="middle" font-size="11.5" fill="#667085">&#8364;/h</text><path d="M1320.20 914.90C1324.46 914.90 1326.59 914.90 1330.86 914.90C1335.12 914.90 1337.25 914.90 1341.51 914.90C1345.78 914.90 1347.91 914.90 1352.17 914.90C1356.43 914.90 1358.56 914.90 1362.83 914.90C1367.09 914.90 1369.22 914.90 1373.48 914.90C1377.75 914.90 1379.88 914.90 1384.14 914.90C1388.40 914.90 1390.53 914.90 1394.80 914.90C1399.06 914.90 1401.19 914.90 1405.45 914.90C1409.72 914.90 1411.85 914.90 1416.11 914.90C1420.37 914.90 1422.50 914.90 1426.77 914.90C1431.03 914.90 1433.16 914.90 1437.42 914.90C1441.69 914.90 1443.82 914.90 1448.08 914.90C1452.34 914.90 1454.47 914.90 1458.74 914.90C1463.00 914.90 1465.13 914.90 1469.39 914.90C1473.66 914.90 1479.45 914.90 1480.05 914.90C1487.98 862.38 1484.89 830.00 1490.71 773.71C1493.42 747.46 1498.42 700.30 1501.36 708.54C1506.95 724.19 1504.16 787.40 1512.02 833.44C1512.69 837.36 1518.41 833.44 1522.68 833.44C1526.94 833.44 1530.32 831.14 1533.33 833.44C1538.84 837.65 1539.73 843.22 1543.99 849.73C1548.25 856.25 1552.92 870.86 1554.65 866.03C1561.45 846.97 1560.89 820.39 1565.30 790.00C1569.41 761.74 1571.16 723.07 1575.96 719.40C1579.68 716.56 1579.47 755.49 1586.62 773.71C1587.99 777.22 1595.46 770.48 1597.27 773.71C1603.99 785.68 1601.22 799.75 1607.93 811.72C1609.74 814.95 1614.32 811.72 1618.59 811.72C1622.85 811.72 1628.45 807.88 1629.24 811.72C1636.97 849.15 1635.64 873.63 1639.90 914.90 L1639.90 914.90 L1320.20 914.90 Z" fill="rgba(25,135,84,0.2)"/><line x1="1320.20" y1="914.90" x2="1639.90" y2="914.90" stroke="#7dd3a0" stroke-width="2"/><circle cx="1320.20" cy="914.90" r="2.6" fill="#7dd3a0"/><circle cx="1330.86" cy="914.90" r="2.6" fill="#7dd3a0"/><circle cx="1341.51" cy="914.90" r="2.6" fill="#7dd3a0"/><circle cx="1352.17" cy="914.90" r="2.6" fill="#7dd3a0"/><circle cx="1362.83" cy="914.90" r="2.6" fill="#7dd3a0"/><circle cx="1373.48" cy="914.90" r="2.6" fill="#7dd3a0"/><circle cx="1384.14" cy="914.90" r="2.6" fill="#7dd3a0"/><circle cx="1394.80" cy="914.90" r="2.6" fill="#7dd3a0"/><circle cx="1405.45" cy="914.90" r="2.6" fill="#7dd3a0"/><circle cx="1416.11" cy="914.90" r="2.6" fill="#7dd3a0"/><circle cx="1426.77" cy="914.90" r="2.6" fill="#7dd3a0"/><circle cx="1437.42" cy="914.90" r="2.6" fill="#7dd3a0"/><circle cx="1448.08" cy="914.90" r="2.6" fill="#7dd3a0"/><circle cx="1458.74" cy="914.90" r="2.6" fill="#7dd3a0"/><circle cx="1469.39" cy="914.90" r="2.6" fill="#7dd3a0"/><circle cx="1480.05" cy="914.90" r="2.6" fill="#7dd3a0"/><circle cx="1490.71" cy="914.90" r="2.6" fill="#7dd3a0"/><circle cx="1501.36" cy="914.90" r="2.6" fill="#7dd3a0"/><circle cx="1512.02" cy="914.90" r="2.6" fill="#7dd3a0"/><circle cx="1522.68" cy="914.90" r="2.6" fill="#7dd3a0"/><circle cx="1533.33" cy="914.90" r="2.6" fill="#7dd3a0"/><circle cx="1543.99" cy="914.90" r="2.6" fill="#7dd3a0"/><circle cx="1554.65" cy="914.90" r="2.6" fill="#7dd3a0"/><circle cx="1565.30" cy="914.90" r="2.6" fill="#7dd3a0"/><circle cx="1575.96" cy="914.90" r="2.6" fill="#7dd3a0"/><circle cx="1586.62" cy="914.90" r="2.6" fill="#7dd3a0"/><circle cx="1597.27" cy="914.90" r="2.6" fill="#7dd3a0"/><circle cx="1607.93" cy="914.90" r="2.6" fill="#7dd3a0"/><circle cx="1618.59" cy="914.90" r="2.6" fill="#7dd3a0"/><circle cx="1629.24" cy="914.90" r="2.6" fill="#7dd3a0"/><circle cx="1639.90" cy="914.90" r="2.6" fill="#7dd3a0"/><path d="M1320.20 914.90C1324.46 914.90 1326.59 914.90 1330.86 914.90C1335.12 914.90 1337.25 914.90 1341.51 914.90C1345.78 914.90 1347.91 914.90 1352.17 914.90C1356.43 914.90 1358.56 914.90 1362.83 914.90C1367.09 914.90 1369.22 914.90 1373.48 914.90C1377.75 914.90 1379.88 914.90 1384.14 914.90C1388.40 914.90 1390.53 914.90 1394.80 914.90C1399.06 914.90 1401.19 914.90 1405.45 914.90C1409.72 914.90 1411.85 914.90 1416.11 914.90C1420.37 914.90 1422.50 914.90 1426.77 914.90C1431.03 914.90 1433.16 914.90 1437.42 914.90C1441.69 914.90 1443.82 914.90 1448.08 914.90C1452.34 914.90 1454.47 914.90 1458.74 914.90C1463.00 914.90 1465.13 914.90 1469.39 914.90C1473.66 914.90 1479.45 914.90 1480.05 914.90C1487.98 862.38 1484.89 830.00 1490.71 773.71C1493.42 747.46 1498.42 700.30 1501.36 708.54C1506.95 724.19 1504.16 787.40 1512.02 833.44C1512.69 837.36 1518.41 833.44 1522.68 833.44C1526.94 833.44 1530.32 831.14 1533.33 833.44C1538.84 837.65 1539.73 843.22 1543.99 849.73C1548.25 856.25 1552.92 870.86 1554.65 866.03C1561.45 846.97 1560.89 820.39 1565.30 790.00C1569.41 761.74 1571.16 723.07 1575.96 719.40C1579.68 716.56 1579.47 755.49 1586.62 773.71C1587.99 777.22 1595.46 770.48 1597.27 773.71C1603.99 785.68 1601.22 799.75 1607.93 811.72C1609.74 814.95 1614.32 811.72 1618.59 811.72C1622.85 811.72 1628.45 807.88 1629.24 811.72C1636.97 849.15 1635.64 873.63 1639.90 914.90" fill="none" stroke="#198754" stroke-width="2"/><circle cx="1320.20" cy="914.90" r="2.7" fill="#198754"/><circle cx="1330.86" cy="914.90" r="2.7" fill="#198754"/><circle cx="1341.51" cy="914.90" r="2.7" fill="#198754"/><circle cx="1352.17" cy="914.90" r="2.7" fill="#198754"/><circle cx="1362.83" cy="914.90" r="2.7" fill="#198754"/><circle cx="1373.48" cy="914.90" r="2.7" fill="#198754"/><circle cx="1384.14" cy="914.90" r="2.7" fill="#198754"/><circle cx="1394.80" cy="914.90" r="2.7" fill="#198754"/><circle cx="1405.45" cy="914.90" r="2.7" fill="#198754"/><circle cx="1416.11" cy="914.90" r="2.7" fill="#198754"/><circle cx="1426.77" cy="914.90" r="2.7" fill="#198754"/><circle cx="1437.42" cy="914.90" r="2.7" fill="#198754"/><circle cx="1448.08" cy="914.90" r="2.7" fill="#198754"/><circle cx="1458.74" cy="914.90" r="2.7" fill="#198754"/><circle cx="1469.39" cy="914.90" r="2.7" fill="#198754"/><circle cx="1480.05" cy="914.90" r="2.7" fill="#198754"/><circle cx="1490.71" cy="773.71" r="2.7" fill="#198754"/><circle cx="1501.36" cy="708.54" r="2.7" fill="#198754"/><circle cx="1512.02" cy="833.44" r="2.7" fill="#198754"/><circle cx="1522.68" cy="833.44" r="2.7" fill="#198754"/><circle cx="1533.33" cy="833.44" r="2.7" fill="#198754"/><circle cx="1543.99" cy="849.73" r="2.7" fill="#198754"/><circle cx="1554.65" cy="866.03" r="2.7" fill="#198754"/><circle cx="1565.30" cy="790.00" r="2.7" fill="#198754"/><circle cx="1575.96" cy="719.40" r="2.7" fill="#198754"/><circle cx="1586.62" cy="773.71" r="2.7" fill="#198754"/><circle cx="1597.27" cy="773.71" r="2.7" fill="#198754"/><circle cx="1607.93" cy="811.72" r="2.7" fill="#198754"/><circle cx="1618.59" cy="811.72" r="2.7" fill="#198754"/><circle cx="1629.24" cy="811.72" r="2.7" fill="#198754"/><circle cx="1639.90" cy="914.90" r="2.7" fill="#198754"/><circle cx="1372.2" cy="666.7" r="5.8" fill="rgba(25,135,84,0.2)" stroke="#198754" stroke-width="1.9"/><text x="1382.2" y="670.2" font-size="12" fill="#5b6270">Monitored</text><circle cx="1451.8" cy="666.7" r="5.8" fill="rgba(125,211,160,0.18)" stroke="#7dd3a0" stroke-width="1.9"/><text x="1462.3" y="670.2" font-size="12" fill="#5b6270">Non-Monitored</text></svg>
<div class="a" style="left:0;top:0;width:1659px;height:63px;background:#f9f9fd"></div>
<svg class="a" style="left:0;top:0" width="300" height="62" viewBox="0 0 300 62">
<g fill="#0b6e9f">
<rect x="51.2" y="5.1" width="4.4" height="5.8"/>
<rect x="72.2" y="5.1" width="4.4" height="5.8"/>
<path d="M58.4 5.1H69.3V10.9H66.4V12.9H61V10.9H58.4Z"/>
<ellipse cx="63.7" cy="16.8" rx="19.7" ry="1.8"/>
<ellipse cx="63.7" cy="22.6" rx="19.7" ry="1.8"/>
<ellipse cx="63.7" cy="28.4" rx="19.7" ry="1.8"/>
<ellipse cx="63.7" cy="34.1" rx="19.7" ry="1.8"/>
<path d="M88.5 5.1H93.5V13.7H109.7Q115.2 13.7 115.2 19.2V30.3Q115.2 35.8 109.7 35.8H94Q88.5 35.8 88.5 30.3Z M93.5 18.4V30.7H110.5V18.4Z" fill-rule="evenodd"/>
<rect x="118.8" y="5.1" width="4.4" height="5.8"/>
<rect x="118.8" y="13.7" width="4.4" height="22.1"/>
</g>
<g fill="#73962e">
<path d="M127.2 5.1H131.5V13.7H140.2V18.4H131.5V30.7H142V35.8H132.7Q127.2 35.8 127.2 30.3Z"/>
<path d="M144.5 5.1H149.2V14.1H165.3Q170.8 14.1 170.8 19.6V35.7H166.1V19H149.2V35.7H144.5Z"/>
<path d="M173.9 19.6Q173.9 14.1 179.4 14.1H195Q200.5 14.1 200.5 19.6V20.4Q200.5 25.9 195 25.9H178.6V30.1Q178.6 31.3 179.8 31.3H200.5V35.7H179.4Q173.9 35.7 173.9 30.2Z M178.6 18.6V21.3H195.8V18.6Z" fill-rule="evenodd"/>
<path d="M203.3 35.7V19.6Q203.3 14.1 208.8 14.1H224Q229.5 14.1 229.5 19.6V21.9H224.8V18.8H208V35.7Z"/>
<path d="M233 35.7V19.6Q233 14.1 238.5 14.1H271.5Q277 14.1 277 19.6V35.7H272.3V18.8H257V35.7H252.7V18.8H237.6V35.7Z"/>
</g>
</svg>
<svg class="a" style="left:0;top:0" width="300" height="62"><path d="M99.90 44.02 H92.12 Q89.52 44.02 89.52 46.62 V47.35 Q89.52 49.95 92.12 49.95 H96.38 Q98.98 49.95 98.98 52.55 V53.27 Q98.98 55.88 96.38 55.88 H88.60 M102.83 56.80 V50.72 Q102.83 47.92 105.62 47.92 H117.88 Q120.67 47.92 120.67 50.72 V56.80 M111.85 47.92 V56.80 M123.40 47.92 H131.57 Q134.17 47.92 134.17 50.52 V55.88 H125.66 Q124.02 55.88 124.02 54.24 Q124.02 52.60 125.66 52.60 H134.17 M137.73 56.80 V50.72 Q137.73 47.92 140.53 47.92 H145.67 Q147.27 47.92 147.27 50.60 M151.05 43.10 V53.48 Q151.05 55.88 153.45 55.88 H156.80 M150.12 47.92 H155.90 M160.12 43.10 V53.08 Q160.12 55.88 162.93 55.88 H175.07 Q177.88 55.88 177.88 53.08 V43.10 M168.85 43.10 V55.88 M181.30 47.92 H189.07 Q191.67 47.92 191.67 50.52 V55.88 H183.56 Q181.93 55.88 181.93 54.24 Q181.93 52.60 183.56 52.60 H191.67 M196.15 43.10 V53.48 Q196.15 55.88 198.55 55.88 H201.60 M195.22 47.92 H201.00 M214.70 47.92 H206.83 Q204.03 47.92 204.03 50.72 V53.08 Q204.03 55.88 206.83 55.88 H214.70 M217.23 43.10 V56.80 M217.23 47.92 H224.37 Q227.17 47.92 227.17 50.72 V56.80 M231.12 43.10 V53.08 Q231.12 55.88 233.93 55.88 H246.67 Q249.47 55.88 249.47 53.08 V43.10 M240.45 43.10 V55.88 M253.03 51.15 H261.46 Q263.07 51.15 263.07 49.54 Q263.07 47.92 261.46 47.92 H255.62 Q253.03 47.92 253.03 50.52 V53.27 Q253.03 55.88 255.62 55.88 H264.00 M266.32 43.10 V55.88 H273.27 Q276.07 55.88 276.07 53.08 V50.72 Q276.07 47.92 273.27 47.92 H266.32" stroke="#0b6e9f" stroke-width="1.85" fill="none" stroke-linejoin="round"/></svg>
<div class="t" style="left:620.22px;top:21.00px;font-size:23.478px;font-weight:normal;font-style:italic;letter-spacing:0.000px;color:#0d6fa3;transform:scaleX(0.8824);transform-origin:0 0;-webkit-text-stroke:0.5px #0d6fa3;">STEAM TRAP &amp; VALVE MANAGEMENT SYSTEM</div>
<div class="a" style="left:1431px;top:9px;width:124px;height:44px;border:1px solid #d9dde2;border-radius:5px;background:#f7f8fa"></div>
<svg class="a" style="left:1444.7px;top:18.2px" width="26.5" height="26.5" viewBox="0 0 26.5 26.5">
<defs><clipPath id="fc"><circle cx="13.25" cy="13.25" r="13.25"/></clipPath></defs>
<g clip-path="url(#fc)"><rect width="26.5" height="26.5" fill="#eef0f3"/><rect x="0" y="1.20" width="28" height="2" fill="#ef3b2d"/><rect x="0" y="5.10" width="28" height="2" fill="#ef3b2d"/><rect x="0" y="9.00" width="28" height="2" fill="#ef3b2d"/><rect x="0" y="12.90" width="28" height="2" fill="#ef3b2d"/><rect x="0" y="16.80" width="28" height="2" fill="#ef3b2d"/><rect x="0" y="20.70" width="28" height="2" fill="#ef3b2d"/><rect x="0" y="24.60" width="28" height="2" fill="#ef3b2d"/>
<rect x="0" y="0" width="17.2" height="14.4" fill="#3b4db0"/>
<g fill="#fff" opacity="0.85"><circle cx="2.0" cy="1.8" r="0.55"/><circle cx="4.6" cy="1.8" r="0.55"/><circle cx="7.2" cy="1.8" r="0.55"/><circle cx="9.8" cy="1.8" r="0.55"/><circle cx="12.4" cy="1.8" r="0.55"/><circle cx="15.0" cy="1.8" r="0.55"/><circle cx="3.3" cy="4.5" r="0.55"/><circle cx="5.9" cy="4.5" r="0.55"/><circle cx="8.5" cy="4.5" r="0.55"/><circle cx="11.1" cy="4.5" r="0.55"/><circle cx="13.7" cy="4.5" r="0.55"/><circle cx="16.3" cy="4.5" r="0.55"/><circle cx="2.0" cy="7.2" r="0.55"/><circle cx="4.6" cy="7.2" r="0.55"/><circle cx="7.2" cy="7.2" r="0.55"/><circle cx="9.8" cy="7.2" r="0.55"/><circle cx="12.4" cy="7.2" r="0.55"/><circle cx="15.0" cy="7.2" r="0.55"/><circle cx="3.3" cy="9.9" r="0.55"/><circle cx="5.9" cy="9.9" r="0.55"/><circle cx="8.5" cy="9.9" r="0.55"/><circle cx="11.1" cy="9.9" r="0.55"/><circle cx="13.7" cy="9.9" r="0.55"/><circle cx="16.3" cy="9.9" r="0.55"/><circle cx="2.0" cy="12.6" r="0.55"/><circle cx="4.6" cy="12.6" r="0.55"/><circle cx="7.2" cy="12.6" r="0.55"/><circle cx="9.8" cy="12.6" r="0.55"/><circle cx="12.4" cy="12.6" r="0.55"/><circle cx="15.0" cy="12.6" r="0.55"/></g></g></svg>
<div class="t" style="left:1481.60px;top:24.00px;font-size:15.362px;font-weight:normal;font-style:normal;letter-spacing:0.000px;color:#2b3440;transform:scaleX(0.9959);transform-origin:0 0;">English</div>
<svg class="a" style="left:1536.2px;top:28.9px" width="8" height="5"><path d="M0 0H8L4 4.6Z" fill="#333"/></svg>
<div class="a" style="left:1569.3px;top:13px;width:35.4px;height:35.4px;border:1px solid #d5dbe3;border-radius:50%;background:#fff"></div>
<svg class="a" style="left:1578px;top:19px" width="22" height="22" viewBox="0 0 22 22">
<defs><mask id="mm"><rect width="22" height="22" fill="#fff"/><circle cx="15.6" cy="5.7" r="5.8" fill="#000"/></mask></defs>
<circle cx="10.6" cy="11.3" r="7.9" fill="#6b9228" mask="url(#mm)"/></svg>
<svg class="a" style="left:1611.8px;top:14px" width="34.2" height="34.2" viewBox="0 0 34 34">
<defs><clipPath id="av"><circle cx="17" cy="17" r="17"/></clipPath>
<pattern id="brick" width="9" height="8" patternUnits="userSpaceOnUse"><rect width="9" height="8" fill="#3e2619"/><rect x="0.6" y="0.6" width="7.6" height="3" fill="#8c5836"/><rect x="-4" y="4.6" width="7.6" height="3" fill="#7c4a2d"/><rect x="4.6" y="4.6" width="7.6" height="3" fill="#93603d"/><rect x="1.5" y="1.2" width="4" height="0.9" fill="#b98660"/><rect x="5.5" y="5.3" width="3" height="0.8" fill="#a77350"/></pattern></defs>
<g clip-path="url(#av)"><rect width="34" height="34" fill="url(#brick)"/>
<path d="M10.5 34L11.5 18.5Q13 14.5 17 13.8H22.5Q26.5 14.5 27.5 18.5L29 34Z" fill="#d3dde5"/>
<path d="M17.2 14L20.3 25L23 14Z" fill="#8e2d4d"/>
<path d="M15.5 14.5L19 27L17 34M25 14.5L21.5 27" stroke="#aebcc8" stroke-width="0.7" fill="none"/>
<ellipse cx="20.2" cy="8.6" rx="2.5" ry="3.3" fill="#c79a80"/>
<path d="M17.5 7.2Q17.8 4 20.2 4.2Q22.8 4 22.9 7.2Q21 5.8 17.5 7.2Z" fill="#1a1210"/>
<path d="M10.5 29.5Q13.5 26.5 18.5 28.5L18 34H10.5Z" fill="#121212"/>
</g></svg></body></html>
